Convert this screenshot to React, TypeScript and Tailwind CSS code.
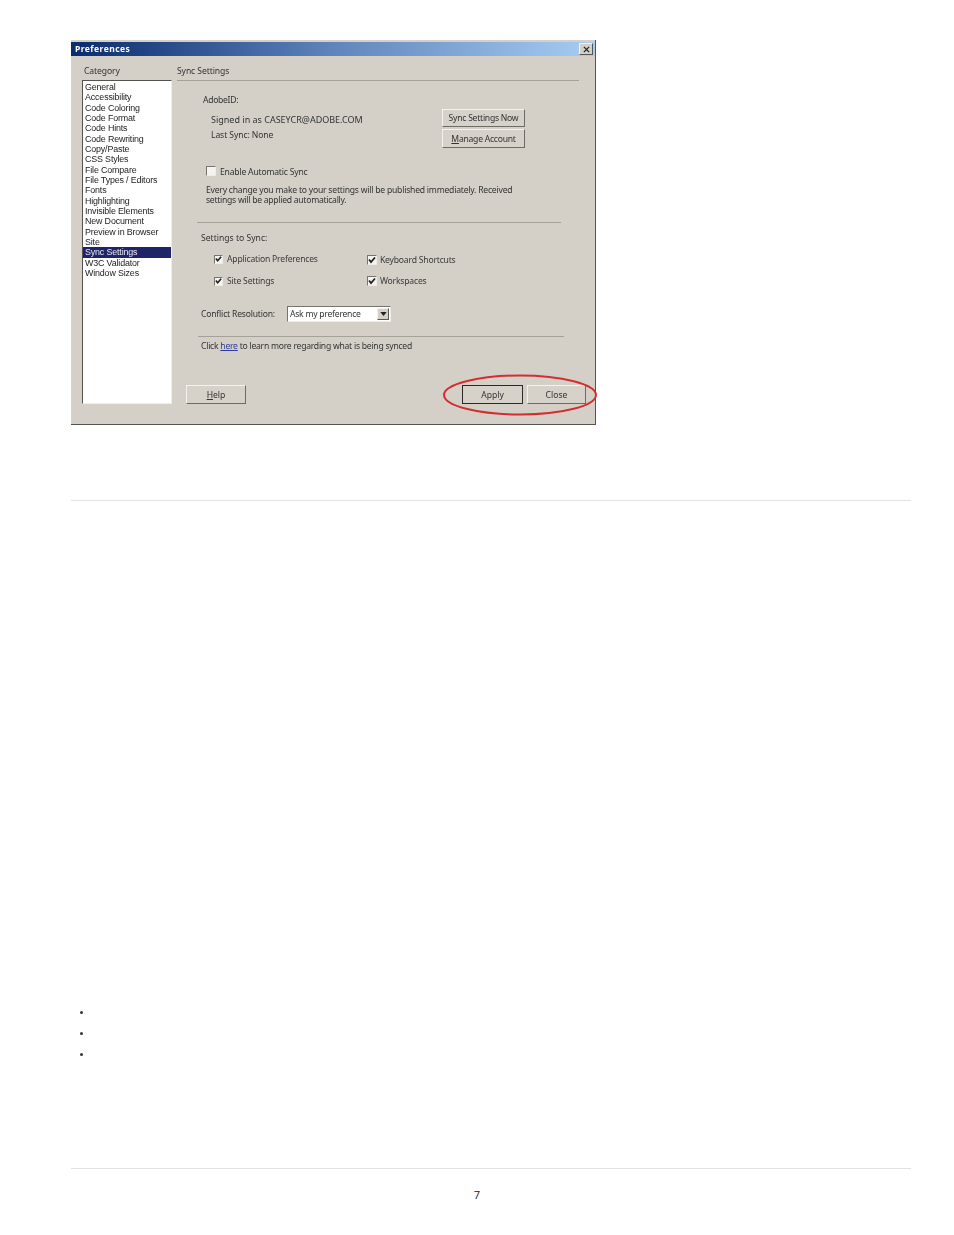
const categories = [
  "General", "Accessibility", "Code Coloring", "Code Format", "Code Hints", "Code Rewriting",
  "Copy/Paste", "CSS Styles", "File Compare", "File Types / Editors", "Fonts", "Highlighting",
  "Invisible Elements", "New Document", "Preview in Browser", "Site", "Sync Settings",
  "W3C Validator", "Window Sizes",
];

function Btn({ className, children }: { className: string; children: React.ReactNode }) {
  return (
    <div className={"flex items-center justify-center shrink-0 bg-[#d6d2ca] border border-t-[#f4f2ee] border-l-[#f4f2ee] border-r-[#6e6b64] border-b-[#6e6b64] " + className}>
      {children}
    </div>
  );
}

function Check({ on, size }: { on: boolean; size: string }) {
  return (
    <div className={"flex items-center justify-center shrink-0 bg-[#f4f3f0] border border-t-[#77746c] border-l-[#77746c] border-r-[#eeece8] border-b-[#eeece8] " + size}>
      {on && (
        <svg viewBox="0 0 8 8" className="w-[8px] h-[8px]">
          <path d="M1 3.5 L3 6 L7 1.5" fill="none" stroke="#222" strokeWidth="1.8" />
        </svg>
      )}
    </div>
  );
}

function Sync({ label, size, gap, shift }: { label: string; size: string; gap: string; shift?: boolean }) {
  return (
    <div className={"flex items-center h-[12px] tracking-[-0.2px] " + gap + " " + (shift ? "mt-px" : "")}>
      <Check on size={size} />
      <span className="text-[#3a3a3a]">{label}</span>
    </div>
  );
}

export default function App() {
  return (
    <div className="w-[954px] h-[1235px] bg-white font-['Noto_Sans',sans-serif] overflow-hidden">
      <div className="pt-[40px] pl-[71px]">
        <div className="relative w-[525px] h-[385px] bg-[#d4d0c8] flex flex-col border-r border-b border-[#55534e] text-[8.6px] leading-[10px] text-[#333] blur-[0.35px]">
          <div className="mt-[2px] h-[14px] bg-gradient-to-r from-[#0c2a6e] via-[#5f85bb] to-[#a8cdf2] flex items-center pl-[4px] pr-[2px] justify-between shrink-0">
            <span className="text-white font-bold text-[8.5px] tracking-[0.45px]">Preferences</span>
            <div className="w-[14px] h-[12px] bg-[#d4d0c8] border border-t-[#f4f2ee] border-l-[#f4f2ee] border-r-[#555] border-b-[#555] flex items-center justify-center">
              <svg viewBox="0 0 8 8" className="w-[7px] h-[7px]">
                <path d="M1 1 L7 7 M7 1 L1 7" stroke="#222" strokeWidth="1.5" />
              </svg>
            </div>
          </div>

          <div className="flex pl-[11px] pt-[10px]">
            <div className="w-[90px] shrink-0">
              <div className="h-[10px] pl-[2px] tracking-[-0.1px]">Category</div>
              <div className="mt-[4px] h-[324px] bg-white border border-t-[#55534e] border-l-[#55534e] border-r-[#f0eee9] border-b-[#f0eee9] pt-px font-['Liberation_Sans',sans-serif]">
                {categories.map((c) => (
                  <div
                    key={c}
                    className={"h-[10.33px] leading-[10.33px] pl-[2px] text-[8.9px] tracking-[-0.15px] whitespace-nowrap " + (c === "Sync Settings" ? "bg-[#1f2468] text-[#e8e8f4]" : "text-[#222]")}
                  >
                    {c}
                  </div>
                ))}
              </div>
            </div>

            <div className="ml-[5px] w-[402px]">
              <div className="h-[15px] border-b border-[#a5a198] tracking-[-0.1px]">Sync Settings</div>

              <div className="mt-[14px] ml-[26px] h-[10px] tracking-[-0.3px]">AdobeID:</div>

              <div className="mt-[4px] flex h-[39px]">
                <div className="ml-[34px] w-[231px] pt-[6px]">
                  <div className="h-[10px] text-[9px] whitespace-nowrap">Signed in as CASEYCR@ADOBE.COM</div>
                  <div className="mt-[5px] h-[10px] tracking-[-0.1px]">Last Sync: None</div>
                </div>
                <div className="w-[83px] flex flex-col justify-between tracking-[-0.25px]">
                  <Btn className="h-[18px]">Sync Settings Now</Btn>
                  <Btn className="h-[19px]"><span><u>M</u>anage Account</span></Btn>
                </div>
              </div>

              <div className="mt-[18px] ml-[29px] h-[10px] flex items-center gap-[4px] tracking-[-0.2px]">
                <Check on={false} size="w-[10px] h-[10px]" />
                <span className="mt-px">Enable Automatic Sync</span>
              </div>

              <div className="mt-[9px] ml-[29px] whitespace-nowrap tracking-[-0.22px]">
                <div>Every change you make to your settings will be published immediately. Received</div>
                <div className="tracking-[-0.27px]">settings will be applied automatically.</div>
              </div>

              <div className="mt-[17px] ml-[20px] w-[364px] h-px bg-[#a5a198]" />

              <div className="mt-[10px] ml-[24px] h-[10px]">Settings to Sync:</div>

              <div className="mt-[10px] ml-[37px] grid grid-cols-[153px_1fr] gap-y-[9px]">
                <Sync label="Application Preferences" size="w-[9px] h-[9px]" gap="gap-[4px]" />
                <Sync label="Keyboard Shortcuts" size="w-[10px] h-[10px]" gap="gap-[3px]" shift />
                <Sync label="Site Settings" size="w-[9px] h-[9px]" gap="gap-[4px]" />
                <Sync label="Workspaces" size="w-[10px] h-[10px]" gap="gap-[3px]" />
              </div>

              <div className="mt-[19px] ml-[24px] flex items-center h-[16px]">
                <div className="w-[86px] tracking-[-0.2px]">Conflict Resolution:</div>
                <div className="w-[104px] h-[16px] bg-white border border-t-[#77746c] border-l-[#77746c] border-r-[#eeece8] border-b-[#eeece8] flex items-center justify-between pl-[2px] pr-px">
                  <span className="tracking-[-0.25px]">Ask my preference</span>
                  <div className="w-[12px] h-[12px] bg-[#d4d0c8] border border-t-[#f4f2ee] border-l-[#f4f2ee] border-r-[#555] border-b-[#555] flex items-center justify-center">
                    <svg viewBox="0 0 8 5" className="w-[7px] h-[4px]">
                      <path d="M0 0 H8 L4 5 Z" fill="#222" />
                    </svg>
                  </div>
                </div>
              </div>

              <div className="mt-[14px] ml-[21px] w-[366px] h-px bg-[#a5a198]" />

              <div className="mt-[4px] ml-[24px] h-[10px] whitespace-nowrap tracking-[-0.25px]">
                Click <span className="text-[#2c3a9c] underline">here</span> to learn more regarding what is being synced
              </div>

              <div className="mt-[34px] ml-[9px] flex">
                <Btn className="w-[60px] h-[19px]"><span><u>H</u>elp</span></Btn>
                <Btn className="ml-[216px] w-[61px] h-[19px] !border-[#2b2a28]">Apply</Btn>
                <Btn className="ml-[4px] w-[59px] h-[19px]">Close</Btn>
              </div>
            </div>
          </div>

          <svg viewBox="0 0 156 44" className="absolute left-[371px] top-[333px] w-[156px] h-[44px] overflow-visible">
            <ellipse cx="78" cy="22" rx="76" ry="19.5" fill="none" stroke="#d42f30" strokeWidth="2" />
          </svg>
        </div>
      </div>

      <div className="mt-[75px] ml-[71px] w-[840px] h-px bg-[#e2e2e2]" />

      <ul className="mt-[501px] ml-[80px]">
        {[0, 1, 2].map((i) => (
          <li key={i} className="h-[21px] flex items-center">
            <span className="w-[3px] h-[3px] rounded-full bg-[#333]" />
          </li>
        ))}
      </ul>

      <div className="mt-[103px] ml-[71px] w-[840px] h-px bg-[#e2e2e2]" />

      <div className="mt-[19px] text-center text-[11px] leading-[13px] text-[#222] font-['Open_Sans',sans-serif]">7</div>
    </div>
  );
}
